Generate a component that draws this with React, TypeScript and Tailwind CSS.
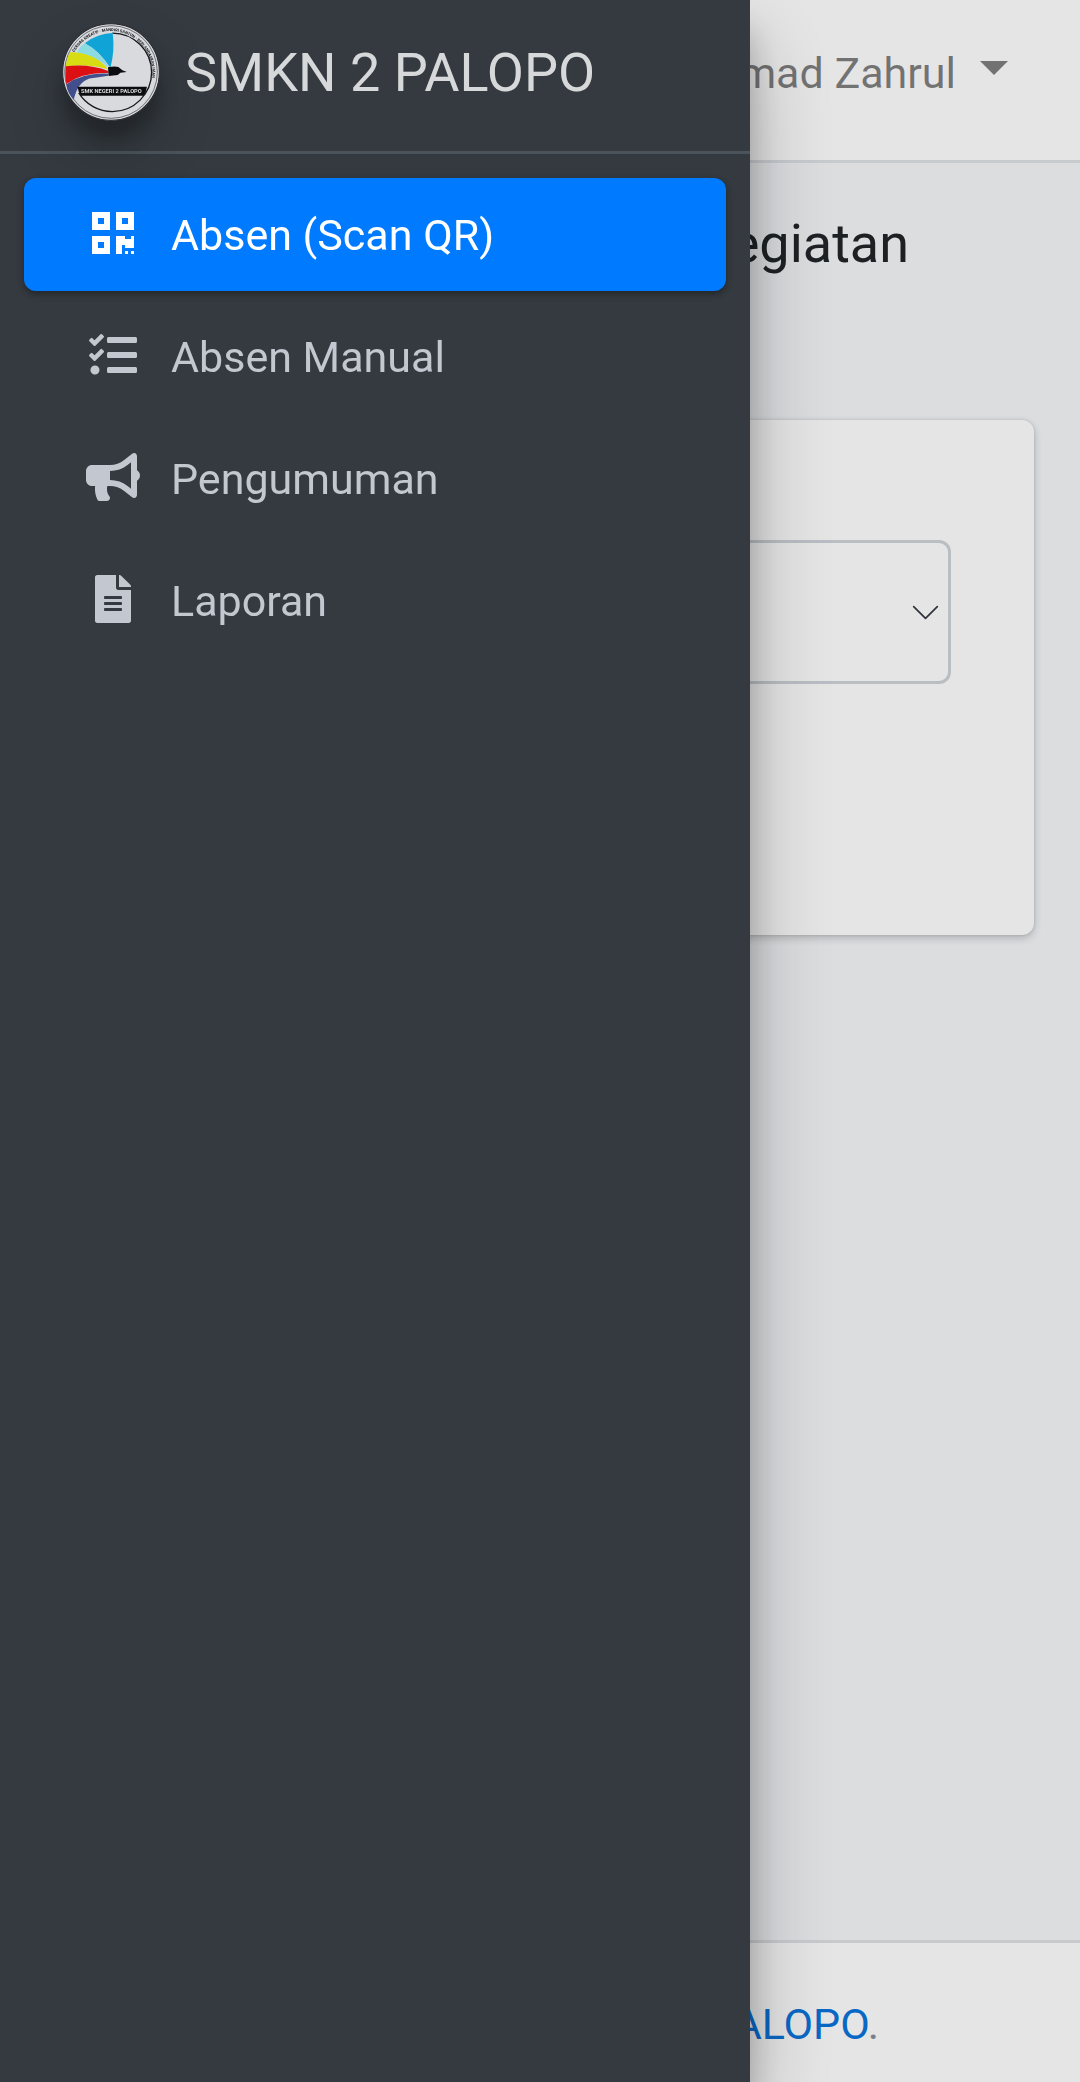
import React from "react";
import { FaBullhorn, FaFileAlt, FaQrcode, FaTasks } from "react-icons/fa";
import type { IconType } from "react-icons";
import clsx from "clsx";

type MenuItem = {
  label: string;
  icon: IconType;
  active?: boolean;
};

const menu: MenuItem[] = [
  { label: "Absen (Scan QR)", icon: FaQrcode, active: true },
  { label: "Absen Manual", icon: FaTasks },
  { label: "Pengumuman", icon: FaBullhorn },
  { label: "Laporan", icon: FaFileAlt },
];

const Logo: React.FC = () => (
  <svg
    viewBox="38 38 292 292"
    role="img"
    aria-label="Logo SMKN 2 Palopo"
    className="size-[98px] shrink-0 rounded-full shadow-[0_30px_60px_rgba(0,0,0,0.19),0_18px_18px_rgba(0,0,0,0.23)]"
  >
    <circle cx="184" cy="184" r="144" fill="#d8dadd" stroke="#24282c" strokeWidth="3" />
    <circle cx="184" cy="184" r="138" fill="none" stroke="#3a3d42" strokeWidth="2" />
    {/* Inner ring, open on the left where the feathers are */}
    <path
      d="M188 68 A117 117 0 0 1 188 302 A117 117 0 0 1 88 246"
      fill="none"
      stroke="#15181b"
      strokeWidth="4"
    />
    <defs>
      <path id="motto" d="M75 125 A124 124 0 0 1 301 224" />
    </defs>
    <text fontSize="12" fontWeight="700" fill="#15181b" className="font-['Roboto',sans-serif]">
      <textPath href="#motto">CERDAS KREATIF · MANDIRI SANTUN · BERLANDASKAN IMAN</textPath>
    </text>
    {/* Feathers */}
    <path d="M106 98 Q145 69 189 68 Q196 122 182 172 Q152 122 106 98Z" fill="#0fa3d6" />
    <path d="M106 98 Q152 122 180 174 Q138 134 82 126 Q90 108 106 98Z" fill="#8bdce2" />
    <path d="M62 125 Q135 125 176 176 Q118 158 49 168 Q52 142 62 125Z" fill="#d8dc12" />
    <path d="M49 167 Q118 158 176 181 L176 187 Q98 184 51 220 Q46 193 49 167Z" fill="#dc0f12" />
    <path d="M176 189 L176 195 Q146 200 120 203 Q84 214 73 267 Q54 246 51 221 Q98 186 176 189Z" fill="#434f8c" />
    {/* Beak */}
    <path d="M175 170 Q195 166 206 169 L218 179 L231 184 L212 186 L204 193 L177 196Z" fill="#0b0d0f" />
    <path d="M84 228 H291 Q289 244 282 255 H94 Q87 244 84 228Z" fill="#0b0d0f" />
    <text
      x="185"
      y="248"
      textAnchor="middle"
      fontSize="17"
      fontWeight="700"
      fill="#d8dadd"
      className="font-['Roboto',sans-serif]"
    >
      SMK NEGERI 2 PALOPO
    </text>
  </svg>
);

const Sidebar: React.FC = () => (
  <aside className="fixed inset-y-0 left-0 z-20 w-[750px] bg-[#343a40] shadow-[0_42px_84px_rgba(0,0,0,0.25),0_30px_30px_rgba(0,0,0,0.22)]">
    <a
      href="#"
      className="flex h-[154px] items-center gap-[25px] border-b-3 border-[#4b545c] pl-[62px] pb-2"
    >
      <Logo />
      <span className="pt-0.5 text-[54px] leading-[80px] text-white/80">SMKN 2 PALOPO</span>
    </a>

    <nav className="flex flex-col gap-[9px] px-6 pt-6">
      {menu.map(({ label, icon: Icon, active }) => (
        <a
          key={label}
          href="#"
          className={clsx(
            "flex h-[113px] items-center rounded-xl pl-14",
            active
              ? "bg-[#007bff] text-white shadow-[0_3px_9px_rgba(0,0,0,0.12),0_3px_6px_rgba(0,0,0,0.24)]"
              : "text-[#c2c7d0]"
          )}
        >
          <span className="mr-[25px] flex w-[66px] justify-center pb-1">
            <Icon className="h-12 w-[54px]" />
          </span>
          <span className="pt-0.5 leading-[63px]">{label}</span>
        </a>
      ))}
    </nav>
  </aside>
);

const App: React.FC = () => {
  return (
    <div className="flex min-h-screen flex-col bg-[#f4f6f9] font-['Roboto',sans-serif] text-[43px] leading-[63px] text-[#212529]">
      <header className="flex h-[163px] justify-end border-b-3 border-[#dee2e6] bg-white pt-[42px] pr-[72px]">
        <button type="button" className="flex h-[63px] items-center gap-6 text-black/50">
          <span>Muhammad Zahrul</span>
          <span className="mb-3 border-x-14 border-t-14 border-x-transparent border-t-current" />
        </button>
      </header>

      <main className="grow px-[46px] pt-[48px]">
        <h1 className="pr-[125px] text-right text-[54px] leading-[66px]">Absensi Kegiatan</h1>

        <section className="mt-[143px] h-[515px] rounded-xl bg-white px-[83px] pt-[120px] shadow-[0_0_3px_rgba(0,0,0,0.125),0_3px_9px_rgba(0,0,0,0.2)]">
          <div className="relative">
            <select
              aria-label="Kegiatan"
              className="h-[144px] w-full appearance-none rounded-xl border-3 border-[#ced4da] bg-white px-9"
            >
              <option>Pilih Kegiatan</option>
            </select>
            <svg
              viewBox="0 0 16 16"
              className="pointer-events-none absolute top-[59px] right-3 size-[27px]"
              fill="none"
              stroke="#343a40"
              strokeWidth="1"
              strokeLinecap="round"
              strokeLinejoin="round"
            >
              <path d="m1 4.5 7 7 7-7" />
            </svg>
          </div>
        </section>
      </main>

      <footer className="h-[142px] border-t-3 border-[#dee2e6] bg-white pt-[50px] pr-[201px] text-right text-[#869099]">
        Copyright © <a href="#" className="text-[#0a74dc]">SMKN 2 PALOPO</a>.
      </footer>

      {/* Dim layer behind the open sidebar */}
      <div className="fixed inset-0 z-10 bg-black/10" />
      <Sidebar />
    </div>
  );
};

export default App;
